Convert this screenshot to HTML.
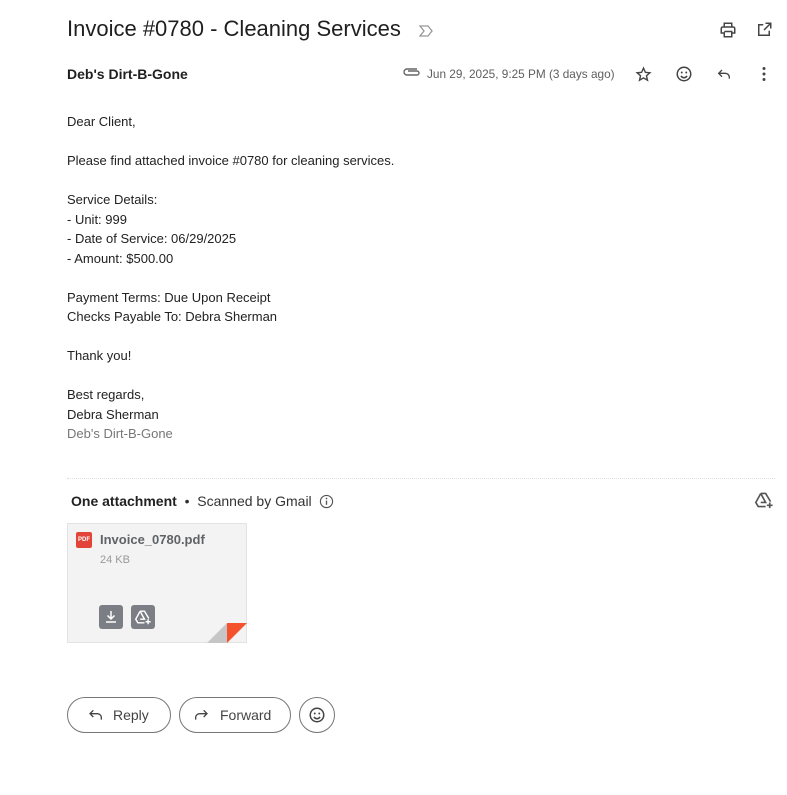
<!DOCTYPE html>
<html><head><meta charset="utf-8">
<style>
*{margin:0;padding:0;box-sizing:border-box}
body{width:787px;height:795px;background:#fff;font-family:"Liberation Sans",Arial,sans-serif;color:#222;position:relative;overflow:hidden}
.abs{position:absolute}
h1{position:absolute;left:67px;top:16px;font-size:22px;font-weight:400;color:#1f1f1f;letter-spacing:0}
.sender{left:67px;top:66px;font-size:14px;font-weight:700;color:#1f1f1f}
.date{left:427px;top:67px;font-size:11.8px;color:#5e5e5e}
.body{left:67px;top:112px;font-size:13px;line-height:19.5px;color:#222}
.grey{color:#777}
.hr{left:67px;top:478px;width:708px;border-top:1px dotted #ddd}
.att{left:71px;top:493px;font-size:14px;color:#333}
.card{left:67px;top:523px;width:180px;height:120px;background:#f3f3f3;border:1px solid #e3e3e3}
.btn{position:absolute;top:697px;height:36px;border:1px solid #747775;border-radius:18px;font-size:14px;color:#444;display:flex;align-items:center}
svg{position:absolute}
</style></head><body>
<h1>Invoice #0780 - Cleaning Services</h1>
<svg style="left:418px;top:23px" width="16" height="16" viewBox="0 0 16 16"><path d="M2 3h8l4 5-4 5H2l4-5z" fill="none" stroke="#999" stroke-width="1.3"/></svg>
<svg style="left:719px;top:21px" width="18" height="18" viewBox="0 0 24 24"><path d="M7 8V3h10v5M5 8h14a2 2 0 0 1 2 2v6h-4v5H7v-5H3v-6a2 2 0 0 1 2-2zM7 14h10v6" fill="none" stroke="#444" stroke-width="2"/></svg>
<svg style="left:755px;top:21px" width="18" height="18" viewBox="0 0 24 24"><path d="M19 13v6H5V5h6M14 3h7v7M21 3l-9 9" fill="none" stroke="#444" stroke-width="2"/></svg>

<div class="abs sender">Deb's Dirt-B-Gone</div>
<svg style="left:402px;top:66px" width="18" height="12" viewBox="0 0 18 12"><path d="M15 3H5a3 3 0 0 0 0 6h10a2 2 0 0 0 0-4H6" fill="none" stroke="#666" stroke-width="1.4"/></svg>
<div class="abs date">Jun 29, 2025, 9:25 PM (3 days ago)</div>
<svg style="left:635px;top:66px" width="17" height="17" viewBox="0 0 24 24"><path d="M12 3l2.7 6 6.3.6-4.8 4.2 1.4 6.2L12 16.8 6.4 20l1.4-6.2L3 9.6 9.3 9z" fill="none" stroke="#444" stroke-width="2"/></svg>
<svg style="left:675px;top:65px" width="18" height="18" viewBox="0 0 24 24"><circle cx="12" cy="12" r="9" fill="none" stroke="#444" stroke-width="2"/><circle cx="9" cy="10" r="1.3" fill="#444"/><circle cx="15" cy="10" r="1.3" fill="#444"/><path d="M8 14.5a4.5 4.5 0 0 0 8 0" fill="none" stroke="#444" stroke-width="2"/></svg>
<svg style="left:715px;top:66px" width="18" height="16" viewBox="0 0 24 24"><path d="M9 6L4 11l5 5M4 11h10a6 6 0 0 1 6 6v2" fill="none" stroke="#444" stroke-width="2"/></svg>
<svg style="left:756px;top:66px" width="16" height="16" viewBox="0 0 16 16"><circle cx="8" cy="2.5" r="1.5" fill="#444"/><circle cx="8" cy="8" r="1.5" fill="#444"/><circle cx="8" cy="13.5" r="1.5" fill="#444"/></svg>

<div class="abs body">Dear Client,<br><br>Please find attached invoice #0780 for cleaning services.<br><br>Service Details:<br>- Unit: 999<br>- Date of Service: 06/29/2025<br>- Amount: $500.00<br><br>Payment Terms: Due Upon Receipt<br>Checks Payable To: Debra Sherman<br><br>Thank you!<br><br>Best regards,<br>Debra Sherman<br><span class="grey">Deb's Dirt-B-Gone</span></div>

<div class="abs hr"></div>
<div class="abs att"><b style="color:#222">One attachment</b> &nbsp;•&nbsp; Scanned by Gmail</div>
<svg style="left:319px;top:494px" width="15" height="15" viewBox="0 0 16 16"><circle cx="8" cy="8" r="6.5" fill="none" stroke="#555" stroke-width="1.2"/><path d="M8 7v4.5" stroke="#555" stroke-width="1.4"/><circle cx="8" cy="4.8" r="0.9" fill="#555"/></svg>
<svg style="left:754px;top:491px" width="20" height="18" viewBox="0 0 24 22"><path d="M8 3h6l6 10M8 3L2 14l3 5h9M8 3l6 11H8" fill="none" stroke="#555" stroke-width="2"/><path d="M19 14v7M15.5 17.5h7" stroke="#555" stroke-width="2"/></svg>

<div class="abs card">
 <div class="abs" style="left:8px;top:8px;width:16px;height:16px;background:#e2443a;border-radius:2px;color:#fff;font-size:6px;font-weight:700;text-align:center;line-height:16px">PDF</div>
 <div class="abs" style="left:32px;top:8px;font-size:13px;font-weight:700;color:#5f6368">Invoice_0780.pdf</div>
 <div class="abs" style="left:32px;top:30px;font-size:11px;color:#999">24 KB</div>
 <div class="abs" style="left:31px;top:81px;width:24px;height:24px;background:#7b7f85;border-radius:3px"></div>
 <svg style="left:35px;top:85px" width="16" height="16" viewBox="0 0 16 16"><path d="M8 2v8M4.5 6.5L8 10l3.5-3.5M3 13h10" fill="none" stroke="#fff" stroke-width="1.5"/></svg>
 <div class="abs" style="left:63px;top:81px;width:24px;height:24px;background:#7b7f85;border-radius:3px"></div>
 <svg style="left:66px;top:85px" width="18" height="16" viewBox="0 0 24 22"><path d="M8 3h6l6 10M8 3L2 14l3 5h9M8 3l6 11H8" fill="none" stroke="#fff" stroke-width="2"/><path d="M19 14v7M15.5 17.5h7" stroke="#fff" stroke-width="2"/></svg>
 <svg style="left:139px;top:99px" width="40" height="20" viewBox="0 0 40 20"><path d="M20 0L0 20h20z" fill="#c6c6c6"/><path d="M20 0h20L20 20z" fill="#f4512c"/></svg>
</div>

<div class="btn" style="left:67px;width:104px;padding-left:21px">
 <svg style="left:20px;top:10px" width="16" height="14" viewBox="0 0 24 20"><path d="M8 3L3 8l5 5M3 8h11a6 6 0 0 1 6 6v3" fill="none" stroke="#444" stroke-width="2"/></svg>
 <span style="margin-left:24px">Reply</span></div>
<div class="btn" style="left:179px;width:112px">
 <svg style="left:13px;top:10px" width="16" height="14" viewBox="0 0 24 20"><path d="M16 3l5 5-5 5M21 8H10a6 6 0 0 0-6 6v3" fill="none" stroke="#444" stroke-width="2"/></svg>
 <span style="margin-left:40px">Forward</span></div>
<div class="btn" style="left:299px;width:36px;justify-content:center">
 <svg style="left:8px;top:8px" width="18" height="18" viewBox="0 0 24 24"><circle cx="12" cy="12" r="9" fill="none" stroke="#444" stroke-width="2"/><circle cx="9" cy="10" r="1.3" fill="#444"/><circle cx="15" cy="10" r="1.3" fill="#444"/><path d="M8 14.5a4.5 4.5 0 0 0 8 0" fill="none" stroke="#444" stroke-width="2"/></svg></div>
</body></html>
